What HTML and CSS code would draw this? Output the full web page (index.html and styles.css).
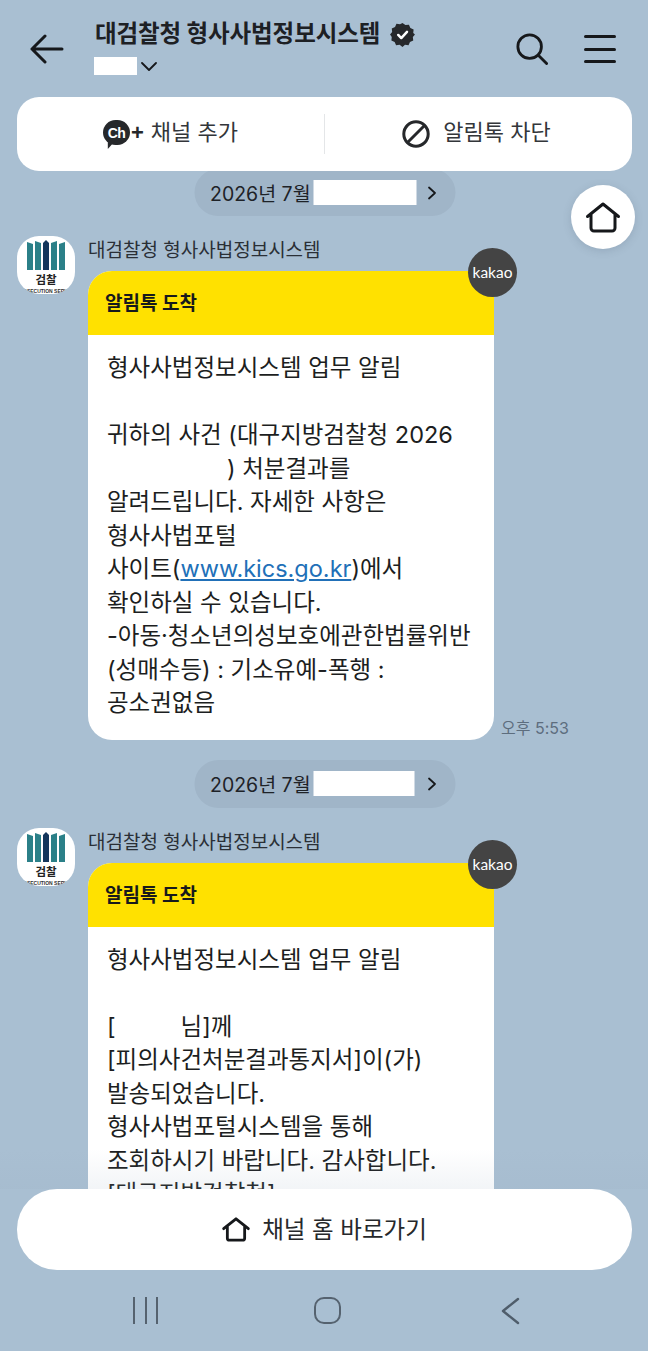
FILE: index.html
```html
<!DOCTYPE html>
<html lang="ko">
<head>
  <meta charset="UTF-8" />
  <title>대검찰청 형사사법정보시스템</title>
  <link rel="stylesheet" href="styles.css">
</head>
<body>
<div class="app">

  <header class="topbar">
    <svg class="back" viewBox="0 0 34 30" fill="none" stroke="#16181b" stroke-width="3" stroke-linecap="round" stroke-linejoin="round"><path d="M32 15H2M15 2 2 15l13 13"/></svg>
    <div class="title-box">
      <div class="title-line">
        <h1>대검찰청 형사사법정보시스템</h1>
        <svg class="verified" viewBox="0 0 24 24"><path fill="#26282b" d="M12 0l3 2.2 3.7-.4 1.5 3.4 3.4 1.5-.4 3.7L25 12l-2.2 2.6.4 3.7-3.4 1.5-1.5 3.4-3.7-.4L12 25l-3-2.2-3.7.4-1.5-3.4-3.4-1.5.4-3.7L-1 12l2.2-2.6-.4-3.7 3.4-1.5 1.5-3.4 3.7.4z"/><path fill="none" stroke="#fff" stroke-width="2.6" stroke-linecap="round" stroke-linejoin="round" d="M7.5 12.5l3.2 3.2 6-6.4"/></svg>
      </div>
      <div class="sub-line">
        <span class="redact redact-sub"></span>
        <svg class="chev-down" viewBox="0 0 16 9" fill="none" stroke="#16181b" stroke-width="1.8" stroke-linecap="round" stroke-linejoin="round"><path d="M1 1l7 7 7-7"/></svg>
      </div>
    </div>
    <svg class="search" viewBox="0 0 34 34" fill="none" stroke="#16181b" stroke-width="3" stroke-linecap="round"><circle cx="14.5" cy="14.5" r="12.5"/><path d="M24 24l8.5 8.5"/></svg>
    <div class="burger"><span></span><span></span><span></span></div>
  </header>

  <div class="actions">
    <div class="action">
      <span class="ch-icon">
        <svg class="ch-tail" viewBox="0 0 10 10"><path fill="#26282b" d="M1 0h9L1 10z"/></svg>
        <span class="ch-text">Ch</span>
      </span>
      <span class="ch-plus">+</span>
      <span class="action-label">채널 추가</span>
    </div>
    <div class="action action-block">
      <svg class="block-icon" viewBox="0 0 28 28" fill="none" stroke="#26282b" stroke-width="3"><circle cx="14" cy="14" r="12.2"/><path d="M22.5 5.5 5.5 22.5"/></svg>
      <span class="action-label">알림톡 차단</span>
    </div>
  </div>

  <main class="chat">
    <div class="date-pill">
      <span>2026년 7월</span><span class="redact redact-date"></span>
      <svg class="chev-right" viewBox="0 0 9 14" fill="none" stroke="#16181b" stroke-width="1.8" stroke-linecap="round" stroke-linejoin="round"><path d="M1.5 1.5 7.5 7l-6 5.5"/></svg>
    </div>

    <div class="msg">
      <div class="avatar">
        <svg class="avatar-bars" viewBox="0 0 38 30"><path fill="#2b8088" d="M0 2l6 2v26H0zM8 1l6 2v27H8z"/><path fill="#14365c" d="M16 3l3-3 3 3v27h-6z"/><path fill="#2b8088" d="M24 3l6-2v29h-6zM32 4l6-2v28h-6z"/></svg>
        <span class="avatar-name">검찰</span>
        <span class="avatar-small">PROSECUTION SERVICE</span>
      </div>
      <div class="msg-col">
        <div class="sender">대검찰청 형사사법정보시스템</div>
        <div class="bubble-row">
          <div class="bubble">
            <div class="kakao">kakao</div>
            <div class="bubble-head">알림톡 도착</div>
            <div class="bubble-body">
              <p>형사사법정보시스템 업무 알림</p>
              <p>&nbsp;</p>
              <p>귀하의 사건 (대구지방검찰청 2026</p>
              <p><span class="blank blank-case"></span>) 처분결과를</p>
              <p>알려드립니다. 자세한 사항은</p>
              <p>형사사법포털</p>
              <p>사이트(<a class="link">www.kics.go.kr</a>)에서</p>
              <p>확인하실 수 있습니다.</p>
              <p>-아동·청소년의성보호에관한법률위반</p>
              <p>(성매수등) : 기소유예-폭행 :</p>
              <p>공소권없음</p>
            </div>
          </div>
          <span class="time">오후 5:53</span>
        </div>
      </div>
    </div>

    <div class="date-pill date-pill-tall">
      <span>2026년 7월</span><span class="redact redact-date2"></span>
      <svg class="chev-right" viewBox="0 0 9 14" fill="none" stroke="#16181b" stroke-width="1.8" stroke-linecap="round" stroke-linejoin="round"><path d="M1.5 1.5 7.5 7l-6 5.5"/></svg>
    </div>

    <div class="msg">
      <div class="avatar">
        <svg class="avatar-bars" viewBox="0 0 38 30"><path fill="#2b8088" d="M0 2l6 2v26H0zM8 1l6 2v27H8z"/><path fill="#14365c" d="M16 3l3-3 3 3v27h-6z"/><path fill="#2b8088" d="M24 3l6-2v29h-6zM32 4l6-2v28h-6z"/></svg>
        <span class="avatar-name">검찰</span>
        <span class="avatar-small">PROSECUTION SERVICE</span>
      </div>
      <div class="msg-col">
        <div class="sender">대검찰청 형사사법정보시스템</div>
        <div class="bubble-row">
          <div class="bubble">
            <div class="kakao">kakao</div>
            <div class="bubble-head">알림톡 도착</div>
            <div class="bubble-body">
              <p>형사사법정보시스템 업무 알림</p>
              <p>&nbsp;</p>
              <p>[<span class="blank blank-name"></span>님]께</p>
              <p>[피의사건처분결과통지서]이(가)</p>
              <p>발송되었습니다.</p>
              <p>형사사법포털시스템을 통해</p>
              <p>조회하시기 바랍니다. 감사합니다.</p>
              <p>[대구지방검찰청]</p>
            </div>
          </div>
        </div>
      </div>
    </div>

    <div class="chat-fade"></div>
  </main>

  <div class="home-fab">
    <svg class="home-icon" viewBox="0 0 34 30" fill="none" stroke="#16181b" stroke-width="3" stroke-linecap="round" stroke-linejoin="round"><path d="M1.500 14.500 17 2l15.500 12.500M5 12v14a3 3 0 0 0 3 3h18a3 3 0 0 0 3-3V12"/></svg>
  </div>

  <div class="channel-home">
    <svg class="home-icon-small" viewBox="0 0 34 30" fill="none" stroke="#16181b" stroke-width="3.400" stroke-linecap="round" stroke-linejoin="round"><path d="M2 14 17 2l15 12M6.500 11v14.500a2.500 2.500 0 0 0 2.500 2.500h16a2.500 2.500 0 0 0 2.500-2.500V11"/></svg>
    <span class="channel-label">채널 홈 바로가기</span>
  </div>

  <nav class="sysnav">
    <div class="nav-recent"><span></span><span></span><span></span></div>
    <div class="nav-home"></div>
    <svg class="nav-back" viewBox="0 0 20 28" fill="none" stroke="#4f5d6b" stroke-width="2.400" stroke-linecap="round" stroke-linejoin="round"><path d="M18 2 3 14l15 12"/></svg>
  </nav>

</div>
</body>
</html>
```

FILE: styles.css
```css
* { box-sizing: border-box; margin: 0; padding: 0; }

html, body { height: 100%; }

body {
  background: #a9bfd2;
  color: #1a1c1f;
  font-family: Inter, "Noto Sans CJK KR", "Noto Sans", sans-serif;
  overflow: hidden;
}

.app {
  position: relative;
  width: 648px;
  height: 1351px;
  display: flex;
  flex-direction: column;
  overflow: hidden;
}

/* top bar */
.topbar {
  height: 97px;
  flex: none;
  display: flex;
  align-items: flex-start;
  padding: 0 32px 0 30px;
}

.back { width: 34px; height: 30px; margin-top: 34px; flex: none; }

.title-box { margin-left: 32px; flex: 1; padding-top: 19px; }

.title-line { display: flex; align-items: center; height: 30px; }

h1 {
  font-size: 23.500px;
  font-weight: 700;
  line-height: 30px;
  letter-spacing: -0.1px;
  color: #1d2024;
  margin-left: -1px;
}

.verified { width: 23px; height: 23px; margin-left: 11px; overflow: visible; }

.sub-line { display: flex; align-items: center; margin-top: 8px; margin-left: -2px; }

.redact { display: inline-block; background: #fff; }
.redact-sub { width: 43px; height: 18px; }
.redact-date { width: 103px; height: 25px; margin-left: 3px; }
.redact-date2 { width: 101px; height: 25px; margin-left: 3px; margin-right: 2px; }

.chev-down { width: 16px; height: 9px; margin-left: 4px; }

.search { width: 32px; height: 32px; margin-top: 33px; flex: none; }

.burger {
  width: 32px;
  height: 28px;
  margin-top: 35px;
  margin-left: 36px;
  flex: none;
  display: flex;
  flex-direction: column;
  justify-content: space-between;
}

.burger span { height: 3px; background: #16181b; border-radius: 2px; }

/* action card */
.actions {
  flex: none;
  height: 74px;
  margin: 0 16px 0 17px;
  background: #fff;
  border-radius: 22px;
  display: flex;
  align-items: center;
  position: relative;
  z-index: 2;
}

.action {
  flex: 1;
  height: 40px;
  margin-top: -1px;
  display: flex;
  align-items: center;
  justify-content: center;
}

.action:first-child { border-right: 1px solid #e4e6e8; }
.action-block .action-label { margin-right: 4px; }

.action-label { font-size: 22px; color: #33363a; line-height: 30px; margin-top: -3px; }

.ch-icon {
  position: relative;
  width: 27px;
  height: 25px;
  margin-top: -2px;
  background: #26282b;
  border-radius: 13px;
  display: flex;
  align-items: center;
  justify-content: center;
}

.ch-text {
  color: #fff;
  font-family: "Liberation Sans", sans-serif;
  font-size: 14px;
  font-weight: 700;
  letter-spacing: -0.5px;
}

.ch-tail { position: absolute; left: 4px; top: 21px; width: 8px; height: 8px; }

.ch-plus {
  font-family: "Liberation Sans", sans-serif;
  font-size: 22px;
  font-weight: 700;
  line-height: 25px;
  margin-top: -2px;
  color: #26282b;
  margin-right: 7px;
  margin-left: 1px;
}

.block-icon { width: 28px; height: 28px; margin-right: 13px; }

/* chat */
.chat {
  flex: 1;
  min-height: 0;
  overflow: hidden;
  position: relative;
  margin-top: -2px;
}

.date-pill {
  width: 261px;
  height: 47px;
  margin: 0 auto 20px;
  transform: translateX(.5px);
  background: #a0b5c8;
  border-radius: 24px;
  display: flex;
  align-items: center;
  padding-left: 16px;
  font-size: 19.500px;
  color: #1e2227;
}

.date-pill-tall { height: 48px; margin-top: 20px; }

.chev-right { width: 9px; height: 14px; margin-left: 11px; }

.msg { display: flex; padding-left: 17px; }

.avatar {
  width: 58px;
  height: 58px;
  flex: none;
  background: #fff;
  border-radius: 22px;
  display: flex;
  flex-direction: column;
  align-items: center;
  overflow: hidden;
  padding-top: 4px;
}

.avatar-bars { width: 38px; height: 30px; flex: none; }

.avatar-name {
  font-size: 11.500px;
  font-weight: 700;
  line-height: 15px;
  margin-top: 3px;
  color: #222;
}

.avatar-small {
  font-family: "Liberation Sans", sans-serif;
  font-size: 5px;
  font-weight: 700;
  line-height: 6px;
  white-space: nowrap;
  color: #333;
}

.msg-col { margin-left: 13px; }

.sender {
  font-size: 19px;
  line-height: 30px;
  margin-bottom: 5px;
  color: #2a2f36;
}

.bubble-row { display: flex; align-items: flex-end; }

.bubble {
  position: relative;
  width: 406px;
  background: #fff;
  border-radius: 24px;
}

.kakao {
  position: absolute;
  top: -23px;
  right: -23px;
  width: 49px;
  height: 49px;
  border-radius: 50%;
  background: #444444;
  color: #fff;
  font-family: Lato, sans-serif;
  font-size: 15.500px;
  line-height: 49px;
  text-align: center;
}

.bubble-head {
  height: 64px;
  background: #ffe100;
  border-radius: 24px 24px 0 0;
  padding-left: 17px;
  font-size: 19px;
  font-weight: 700;
  line-height: 65px;
  color: #17191c;
}

.bubble-body {
  padding: 16px 19px 20px;
  font-size: 23.500px;
  line-height: 33.500px;
  color: #1c1e21;
  white-space: nowrap;
}

.link { color: #2170b8; text-decoration: underline; }

.blank { display: inline-block; }
.blank-case { width: 120px; }
.blank-name { width: 65px; }

.time {
  font-size: 16px;
  color: #5d6d7e;
  margin-left: 7px;
  margin-bottom: 1px;
  line-height: 22px;
}

.chat-fade {
  position: absolute;
  left: 0;
  right: 0;
  bottom: 0;
  height: 40px;
  background: linear-gradient(rgba(150,170,190,0), rgba(150,170,190,.12));
}

/* floating home */
.home-fab {
  position: absolute;
  left: 571px;
  top: 185px;
  width: 64px;
  height: 64px;
  border-radius: 50%;
  background: #fff;
  box-shadow: 0 2px 8px rgba(60,80,100,.18);
  display: flex;
  align-items: center;
  justify-content: center;
}

.home-icon { width: 34px; height: 30px; overflow: visible; }

/* bottom */
.channel-home {
  flex: none;
  height: 81px;
  margin: 0 16px 0 17px;
  background: #fff;
  border-radius: 40px;
  display: flex;
  align-items: center;
  justify-content: center;
  font-size: 23.500px;
  color: #26282b;
  position: relative;
}

.channel-label { margin-top: -3px; margin-left: 1px; }

.home-icon-small { width: 28px; height: 25px; margin-right: 11px; overflow: visible; }

.sysnav {
  flex: none;
  height: 81px;
  display: flex;
  align-items: center;
  justify-content: space-between;
  padding: 0 128px 0 133px;
}

.nav-recent { width: 25px; height: 27px; display: flex; justify-content: space-between; }
.nav-recent span { width: 2px; background: #55626f; }

.nav-home {
  width: 27px;
  height: 27px;
  margin-left: -3px;
  border: 2.500px solid #55626f;
  border-radius: 10px;
}

.nav-back { width: 20px; height: 28px; }
```
